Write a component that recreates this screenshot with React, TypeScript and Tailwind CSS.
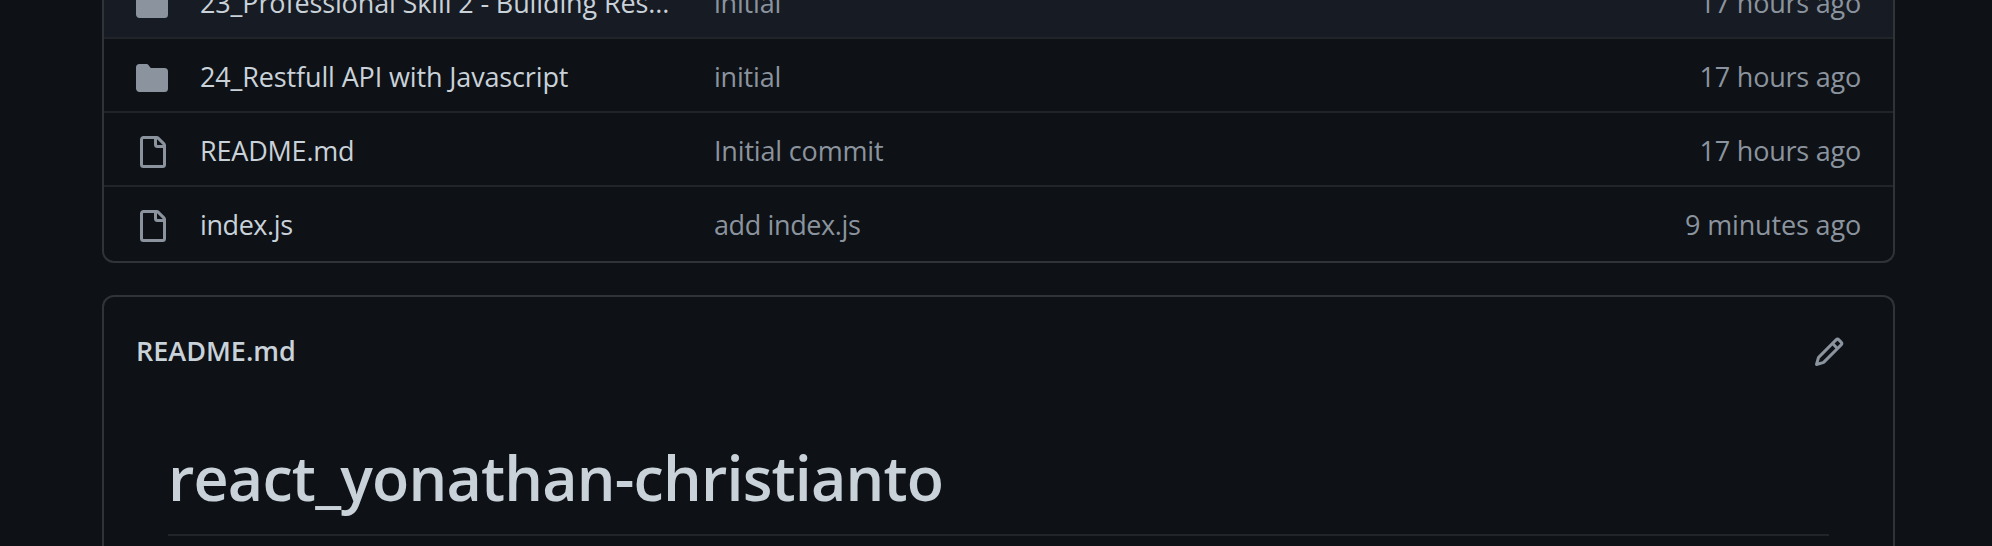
type Kind = "folder" | "file";

interface Entry {
  kind: Kind;
  name: string;
  nameClass: string;
  message: string;
  messageClass: string;
  age: string;
  ageClass: string;
  rowClass: string;
}

const entries: Entry[] = [
  { kind: "folder", name: "23_Professional Skill 2 - Building Res...", nameClass: "tracking-[-0.13px]", message: "initial", messageClass: "tracking-[-0.2px]", age: "17 hours ago", ageClass: "tracking-[-0.22px]", rowClass: "h-[74px] bg-[#171b23]" },
  { kind: "folder", name: "24_Restfull API with Javascript", nameClass: "tracking-[-0.14px]", message: "initial", messageClass: "tracking-[-0.2px]", age: "17 hours ago", ageClass: "tracking-[-0.22px]", rowClass: "h-[74px]" },
  { kind: "file", name: "README.md", nameClass: "tracking-[-0.2px]", message: "Initial commit", messageClass: "tracking-[-0.17px]", age: "17 hours ago", ageClass: "tracking-[-0.22px]", rowClass: "h-[74px]" },
  { kind: "file", name: "index.js", nameClass: "tracking-[-0.42px]", message: "add index.js", messageClass: "tracking-[-0.38px]", age: "9 minutes ago", ageClass: "tracking-[-0.15px]", rowClass: "h-[76px]" },
];

const paths = {
  folder:
    "M1.75 1A1.75 1.75 0 000 2.75v10.5C0 14.216.784 15 1.75 15h12.5A1.75 1.75 0 0016 13.25v-8.5A1.75 1.75 0 0014.25 3H7.5a.25.25 0 01-.2-.1l-.9-1.2C6.07 1.26 5.55 1 5 1H1.75z",
  file:
    "M3.75 1.5a.25.25 0 00-.25.25v12.5c0 .138.112.25.25.25h9.5a.25.25 0 00.25-.25V6h-2.75A1.75 1.75 0 019 4.25V1.5H3.75zm6.75.062V4.25c0 .138.112.25.25.25h2.688a.252.252 0 00-.011-.013l-2.914-2.914a.272.272 0 00-.013-.011zM2 1.75C2 .784 2.784 0 3.75 0h6.586c.464 0 .909.184 1.237.513l2.914 2.914c.329.328.513.773.513 1.237v9.586A1.75 1.75 0 0113.25 16h-9.5A1.75 1.75 0 012 14.25V1.75z",
  pencil:
    "M11.013 1.427a1.75 1.75 0 012.474 0l1.086 1.086a1.75 1.75 0 010 2.474l-8.61 8.61c-.21.21-.47.364-.756.445l-3.251.93a.75.75 0 01-.927-.928l.929-3.25a1.75 1.75 0 01.445-.758l8.61-8.61zm1.414 1.06a.25.25 0 00-.354 0L10.811 3.75l1.439 1.44 1.263-1.263a.25.25 0 000-.354l-1.086-1.086zM11.189 6.25L9.75 4.81l-6.286 6.287a.25.25 0 00-.064.108l-.558 1.953 1.953-.558a.249.249 0 00.108-.064l6.286-6.286z",
};

function Icon({ name }: { name: keyof typeof paths }) {
  return (
    <svg viewBox="0 0 16 16" className="size-8 shrink-0 fill-[#8b949e]" aria-hidden="true">
      <path d={paths[name]} fillRule="evenodd" />
    </svg>
  );
}

function Row({ entry }: { entry: Entry }) {
  return (
    <li className={`flex shrink-0 border-t-2 border-[#212529] px-8 leading-[38px] whitespace-nowrap ${entry.rowClass}`}>
      <div className="mt-[23px] w-16 shrink-0">
        <Icon name={entry.kind} />
      </div>
      <a className={`mt-[19px] w-[514px] shrink-0 text-[#c9d1d9] ${entry.nameClass}`}>{entry.name}</a>
      <span className={`mt-[19px] grow text-[#8b949e] ${entry.messageClass}`}>{entry.message}</span>
      <time className={`mt-[19px] text-[#8b949e] ${entry.ageClass}`}>{entry.age}</time>
    </li>
  );
}

export default function App() {
  return (
    <main className="flex h-[546px] flex-col overflow-hidden bg-[#0e1116] pr-[97px] pl-[102px] font-['Open_Sans','Noto_Sans',sans-serif] text-[27px]">
      <ul className="flex h-[263px] shrink-0 flex-col justify-end overflow-hidden rounded-b-[12px] border-x-2 border-b-2 border-[#303439]">
        {entries.map((entry) => (
          <Row key={entry.name} entry={entry} />
        ))}
      </ul>
      <section className="mt-8 h-[300px] shrink-0 rounded-t-[12px] border-x-2 border-t-2 border-[#303439] px-8">
        <header className="flex justify-between pt-[34px] pr-4">
          <h2 className="mt-px leading-[38px] font-semibold text-[#c9d1d9]">README.md</h2>
          <div className="mt-[5px]">
            <Icon name="pencil" />
          </div>
        </header>
        <h1 className="mr-8 ml-8 mt-[68px] h-[98px] border-b-2 border-[#212529] text-[61px] leading-[80px] font-semibold tracking-[-0.82px] text-[#c9d1d9]">
          react_yonathan-christianto
        </h1>
      </section>
    </main>
  );
}
